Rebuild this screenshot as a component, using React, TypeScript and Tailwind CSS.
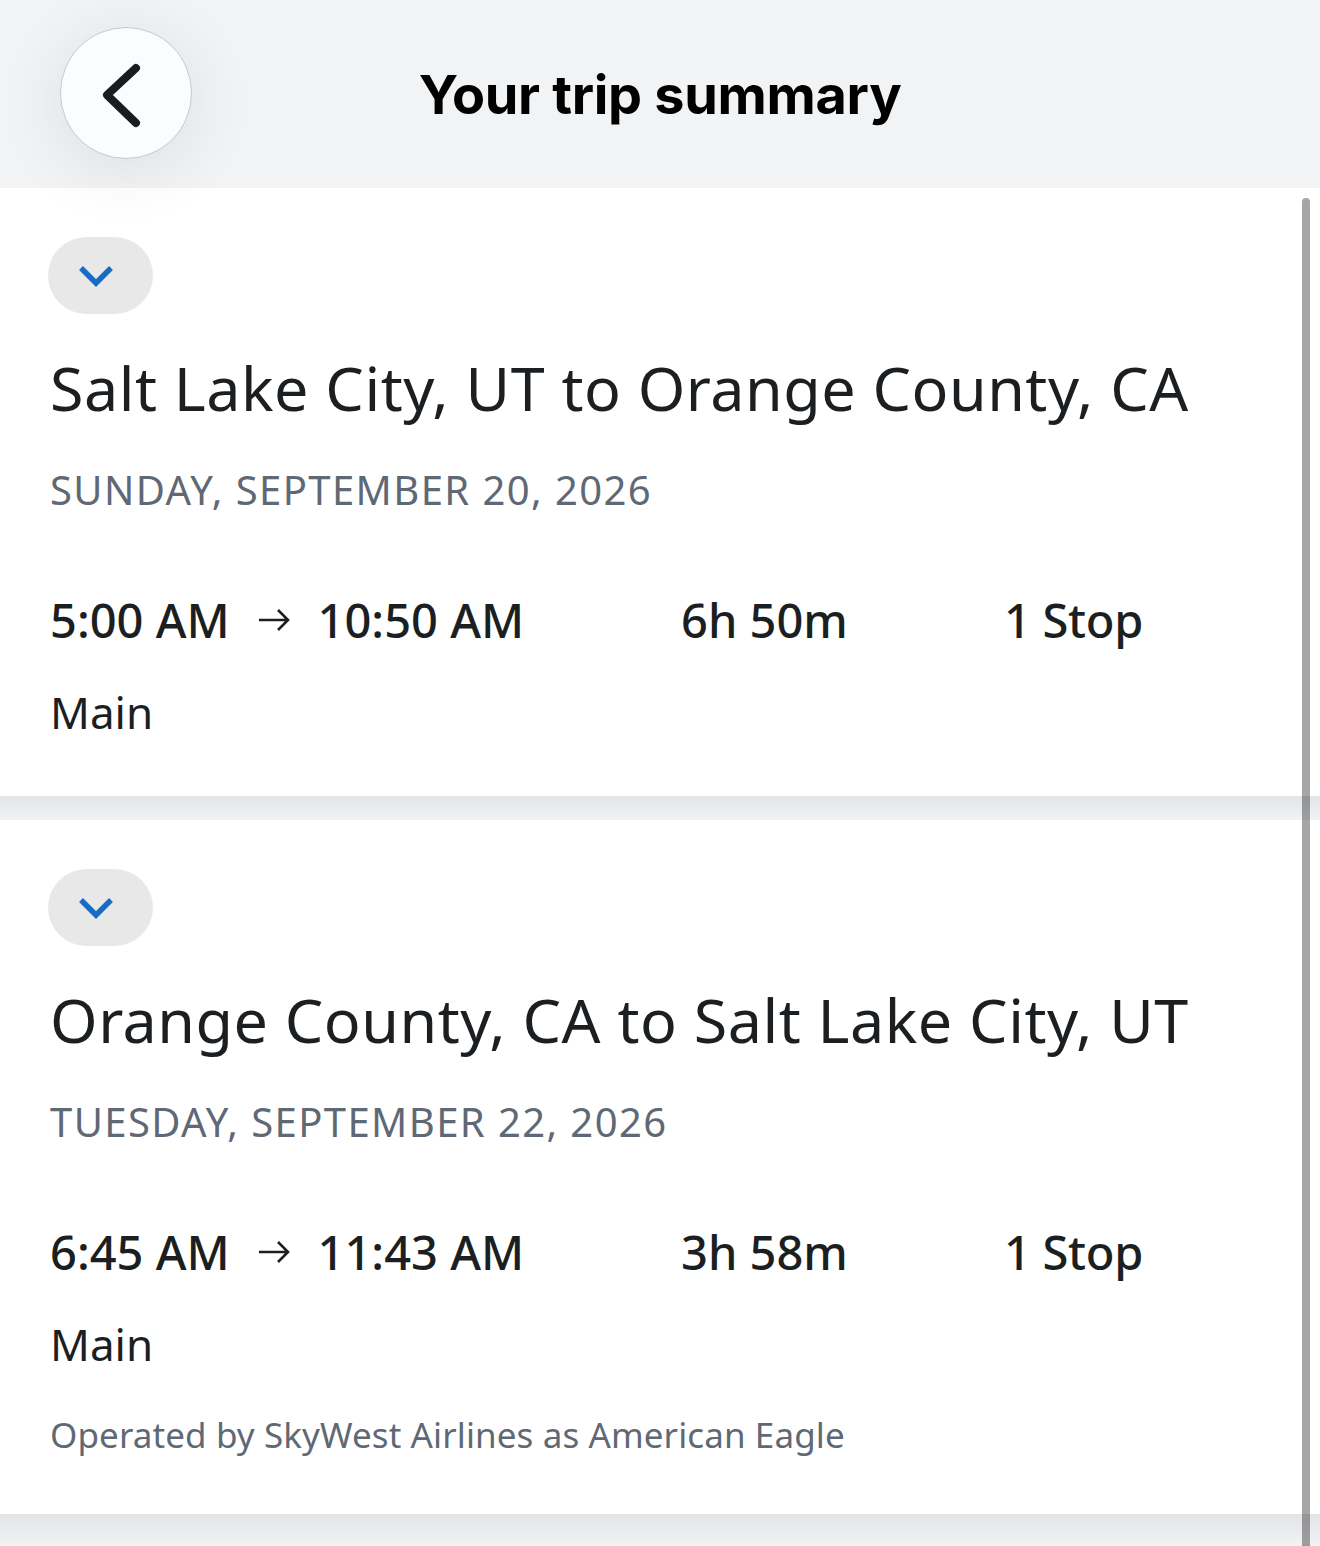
import React from "react";

const body = { fontFamily: '"Noto Sans", "Open Sans", sans-serif' };

function ChevronPill() {
  return (
    <div className="w-[105px] h-[77px] rounded-full bg-[#e8e8e9] flex items-center justify-center">
      <svg width="40" height="24" viewBox="0 0 40 24" className="-ml-[6px]">
        <path d="M3 4 L18 19 L33 4" fill="none" stroke="#1a6bc2" strokeWidth="5.5" strokeLinecap="butt" strokeLinejoin="miter" />
      </svg>
    </div>
  );
}

function Arrow() {
  return (
    <svg width="34" height="24" viewBox="0 0 34 24" className="mx-[27px]">
      <path d="M2 12 H31 M21 2 L31 12 L21 22" fill="none" stroke="#1c1f22" strokeWidth="2.6" strokeLinecap="butt" />
    </svg>
  );
}

function Card({
  route,
  date,
  dep,
  arr,
  dur,
  stops,
  operated,
}: {
  route: string;
  date: string;
  dep: string;
  arr: string;
  dur: string;
  stops: string;
  operated?: string;
}) {
  return (
    <div className="bg-white pl-[48px] pt-[49px] pb-[54px]" style={body}>
      <ChevronPill />
      <div className="mt-[34px] pl-[2px] text-[61px] leading-[80px] text-[#1c1f22] tracking-[0.5px]">{route}</div>
      <div className="mt-[37px] pl-[2px] text-[40px] leading-[50px] text-[#5f6875] uppercase tracking-[1.4px]">{date}</div>
      <div className="mt-[75px] pl-[2px] grid grid-cols-[631px_323px_auto] items-center text-[47px] leading-[60px] font-medium text-[#1c1f22]">
        <div className="flex items-center">
          <span>{dep}</span>
          <Arrow />
          <span>{arr}</span>
        </div>
        <div>{dur}</div>
        <div className="tracking-[-0.3px]">{stops}</div>
      </div>
      <div className="mt-[32px] pl-[2px] text-[44px] leading-[60px] text-[#1c1f22]">Main</div>
      {operated && (
        <div className="mt-[36px] pl-[2px] text-[35px] leading-[50px] text-[#5f6875] tracking-[0.1px]">{operated}</div>
      )}
    </div>
  );
}

export default function App() {
  return (
    <div className="relative w-full h-[1546px] bg-[#f1f2f4] overflow-hidden">
      <header className="relative z-10 h-[188px] bg-[#f2f3f5] flex items-center">
        <div className="absolute left-[60px] top-[27px] w-[132px] h-[132px] rounded-full bg-[#fbfcfd] border border-[#c9c9cb] shadow-[0_10px_70px_rgba(0,0,0,0.09)] flex items-center justify-center">
          <svg width="132" height="132" viewBox="0 0 132 132" className="absolute inset-0">
            <path d="M75 40 L46 67 L75 95" fill="none" stroke="#1b1c1e" strokeWidth="8" strokeLinecap="round" strokeLinejoin="round" />
          </svg>
        </div>
        <h1
          className="w-full text-center text-[54px] font-bold text-black tracking-[-0.3px]"
          style={{ fontFamily: 'Inter, "Liberation Sans", sans-serif' }}
        >
          Your trip summary
        </h1>
      </header>

      <Card
        route="Salt Lake City, UT to Orange County, CA"
        date="Sunday, September 20, 2026"
        dep="5:00 AM"
        arr="10:50 AM"
        dur="6h 50m"
        stops="1 Stop"
      />
      <div className="h-[24px] bg-gradient-to-b from-[#e3e4e6] to-[#f2f3f5]" />
      <Card
        route="Orange County, CA to Salt Lake City, UT"
        date="Tuesday, September 22, 2026"
        dep="6:45 AM"
        arr="11:43 AM"
        dur="3h 58m"
        stops="1 Stop"
        operated="Operated by SkyWest Airlines as American Eagle"
      />
      <div className="h-[33px] bg-gradient-to-b from-[#e3e4e6] to-[#f2f3f5]" />

      <div className="absolute right-[10px] top-[198px] bottom-0 w-[8px] rounded-t-full bg-black/35" />
    </div>
  );
}
